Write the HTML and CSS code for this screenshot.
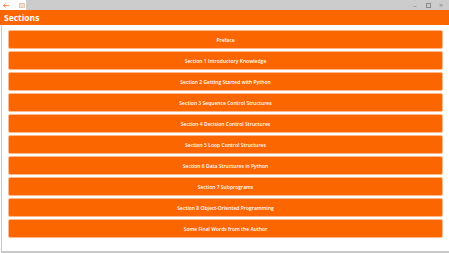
FILE: index.html
```html
<!DOCTYPE html>
<html lang="en">
<head>
    <meta charset="UTF-8">
    <meta name="viewport" content="width=device-width, initial-scale=1.0">
    <title>Sections</title>
    <link rel="stylesheet" href="styles.css">
</head>
<body>
    <div class="window">
        <div class="titlebar">
            <div class="titlebar-left">
                <svg class="back" width="6" height="5" viewBox="0 0 6 5">
                    <path d="M0.5 2.5 H6 M2.5 0.5 L0.5 2.5 L2.5 4.5" fill="none" stroke="#f7864a" stroke-width="0.9"/>
                </svg>
                <span class="app-icon"></span>
            </div>
            <div class="titlebar-right">
                <span class="ctrl">&ndash;</span>
                <span class="ctrl"><span class="max-box"></span></span>
                <span class="ctrl">&times;</span>
            </div>
        </div>

        <header>
            <h1>Sections</h1>
        </header>

        <main>
            <button class="section-btn">Preface</button>
            <button class="section-btn">Section 1 Introductory Knowledge</button>
            <button class="section-btn">Section 2 Getting Started with Python</button>
            <button class="section-btn">Section 3 Sequence Control Structures</button>
            <button class="section-btn">Section 4 Decision Control Structures</button>
            <button class="section-btn">Section 5 Loop Control Structures</button>
            <button class="section-btn">Section 6 Data Structures in Python</button>
            <button class="section-btn">Section 7 Subprograms</button>
            <button class="section-btn">Section 8 Object-Oriented Programming</button>
            <button class="section-btn">Some Final Words from the Author</button>
        </main>
    </div>
</body>
</html>
```

FILE: styles.css
```css
body {
    margin: 0;
    padding: 0;
    font-family: "Open Sans", "Noto Sans", sans-serif;
    background-color: #ffffff;
}

.window {
    width: 449px;
    height: 253px;
    display: flex;
    flex-direction: column;
    overflow: hidden;
}

.titlebar {
    height: 10px;
    display: flex;
    background-color: #cccccc;
}

.titlebar-left {
    width: 26px;
    background-color: #ffffff;
    display: flex;
    align-items: center;
    gap: 10px;
    padding-left: 3px;
    box-sizing: border-box;
}

.back {
    display: block;
}

.app-icon {
    width: 4px;
    height: 3px;
    border: 1px solid #e6c8b8;
    background-color: #f3ded2;
}

.titlebar-right {
    flex: 1;
    display: flex;
    justify-content: flex-end;
    align-items: center;
    gap: 5px;
    padding-right: 4px;
}

.ctrl {
    width: 8px;
    display: flex;
    justify-content: center;
    align-items: center;
    color: #8a8a8a;
    font-size: 7px;
    line-height: 7px;
}

.max-box {
    width: 3px;
    height: 3px;
    border: 1px solid #8a8a8a;
}

header {
    height: 15px;
    background-color: #fc6600;
    display: flex;
    align-items: center;
    padding-left: 4px;
}

header h1 {
    margin: 0;
    color: #ffffff;
    font-size: 8.5px;
    font-weight: 700;
}

main {
    flex: 1;
    display: flex;
    flex-direction: column;
    gap: 2px;
    padding: 5px 6px 0 6px;
    margin-left: 1px;
    border-left: 1px solid #c8c8c8;
    border-bottom: 2px solid #c8c8c8;
}

.section-btn {
    height: 19px;
    width: 100%;
    background-color: #fc6600;
    border: 1px solid #fdb98a;
    border-radius: 2px;
    color: #ffffff;
    font-family: "Open Sans", "Noto Sans", sans-serif;
    font-size: 5px;
    font-weight: 600;
    padding: 0;
    cursor: pointer;
}
```
